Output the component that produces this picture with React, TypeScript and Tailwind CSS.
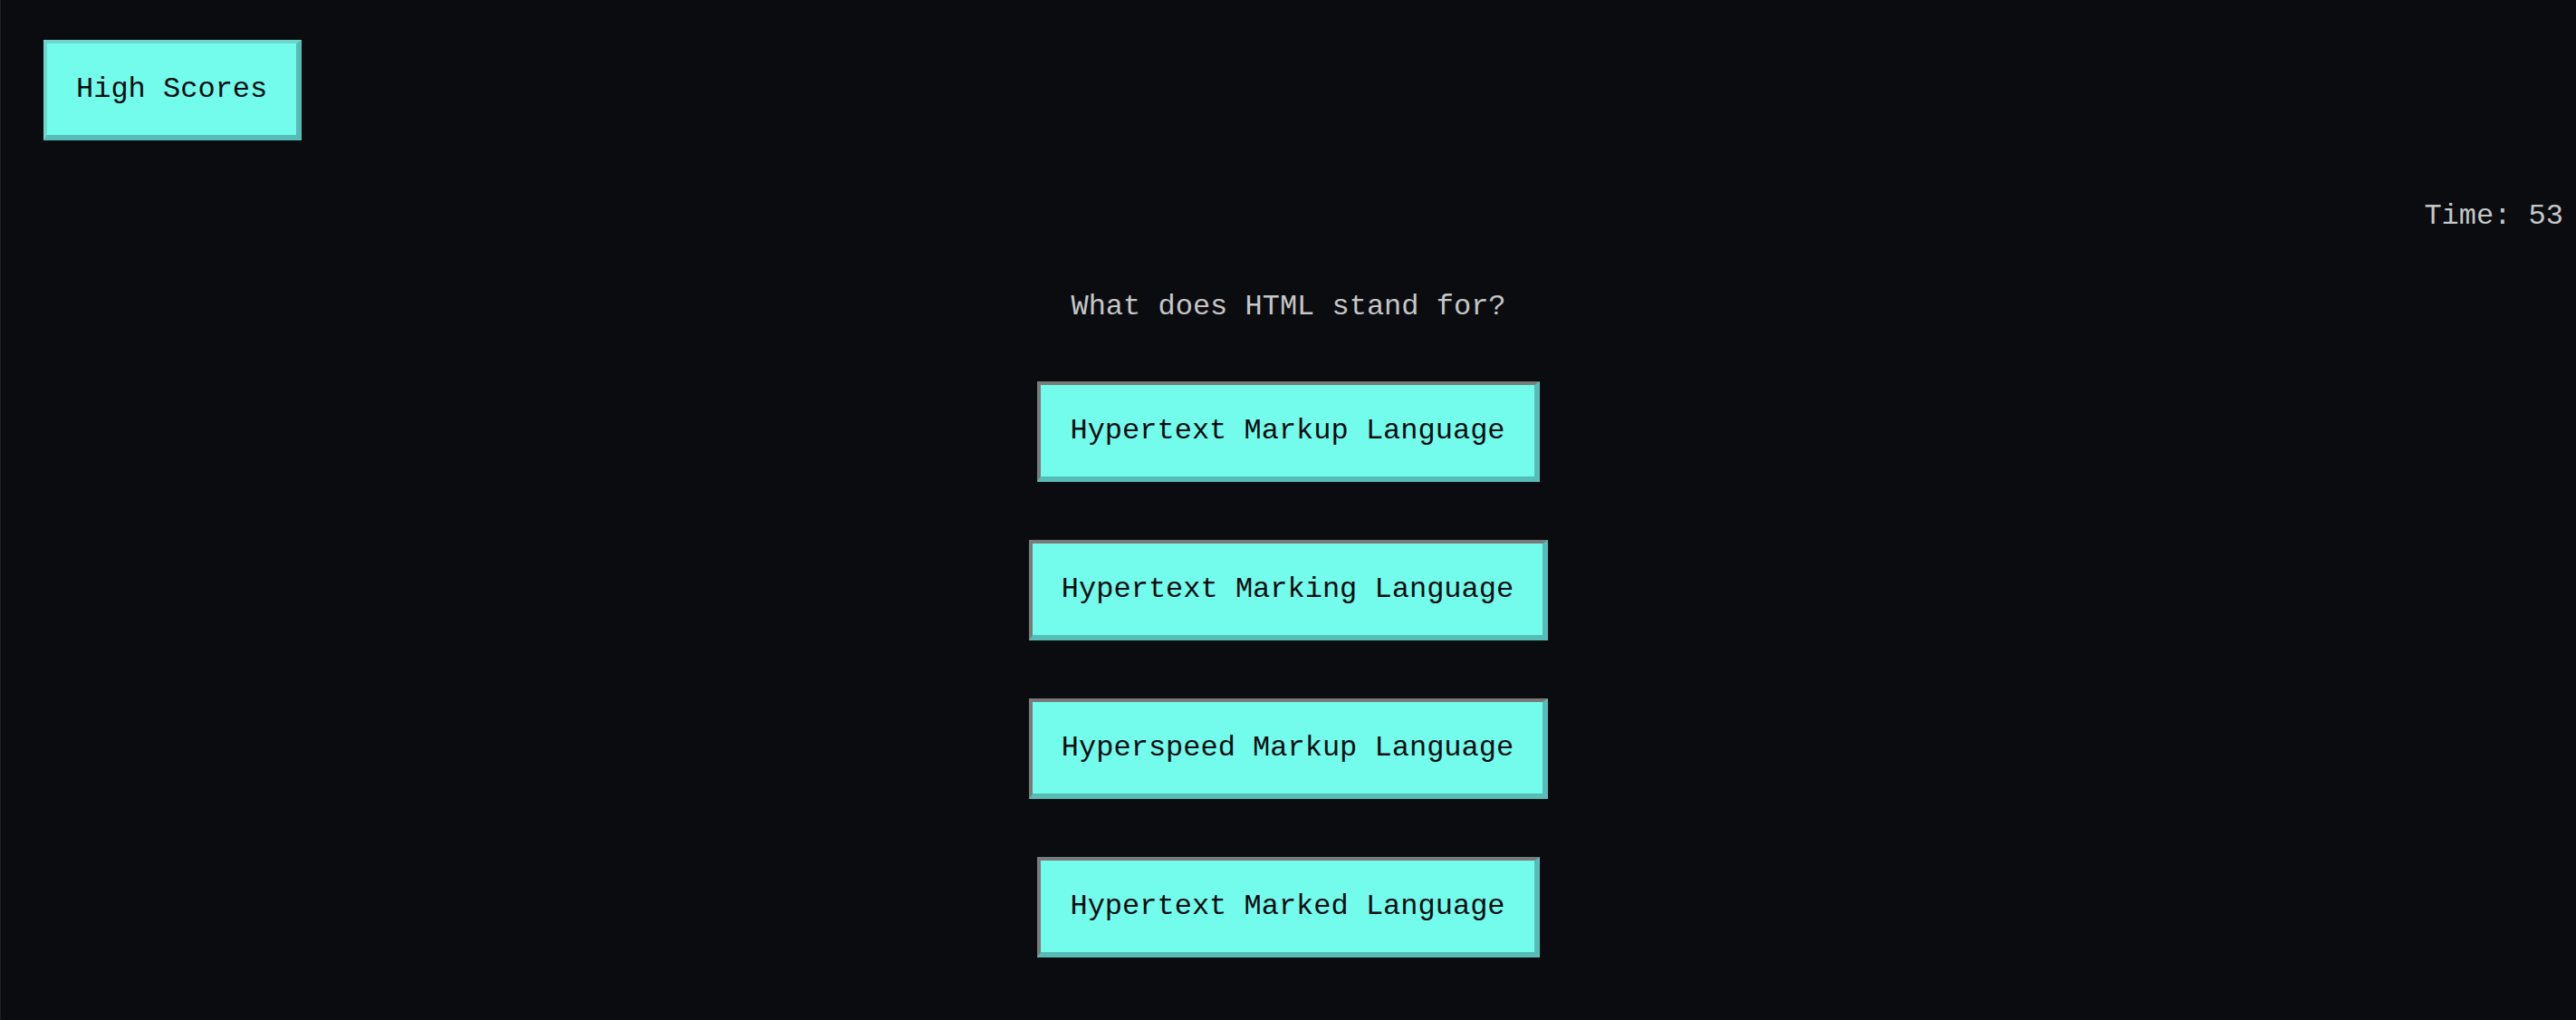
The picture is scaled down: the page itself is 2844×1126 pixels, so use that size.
import React, { useState } from 'react';

interface Question {
  title: string;
  choices: string[];
}

const question: Question = {
  title: 'What does HTML stand for?',
  choices: [
    'Hypertext Markup Language',
    'Hypertext Marking Language',
    'Hyperspeed Markup Language',
    'Hypertext Marked Language',
  ],
};

const App: React.FC = () => {
  const [time] = useState(53);

  return (
    <div className="min-h-screen bg-[#0b0c10] border-l border-[#1e1f23] font-['Liberation_Mono','Courier_New',monospace] text-[32px] leading-[37px]">
      <header className="pt-[44px] pl-[47px]">
        <button className="bg-[#73fcec] text-[#0b0c10] px-[32px] py-[32px] border-solid border-t-4 border-l-4 border-b-[6px] border-r-[6px] border-t-[#6fd6cc] border-l-[#6fd6cc] border-b-[#55bdb5] border-r-[#55bdb5] cursor-pointer">
          High Scores
        </button>
      </header>

      <div className="mt-[65px] pr-[14px] text-right text-[#c5c6c7]">Time: {time}</div>

      <main className="mt-[63px] flex flex-col items-center gap-[64px]">
        <p className="text-[#c5c6c7]">{question.title}</p>
        {question.choices.map((choice) => (
          <button
            key={choice}
            className="bg-[#73fcec] text-[#0b0c10] px-[32px] py-[32px] border-solid border-t-4 border-l-4 border-b-[6px] border-r-[6px] border-t-[#7a7a7a] border-l-[#7a7a7a] border-b-[#55bdb5] border-r-[#55bdb5] cursor-pointer"
          >
            {choice}
          </button>
        ))}
      </main>
    </div>
  );
};

export default App;
